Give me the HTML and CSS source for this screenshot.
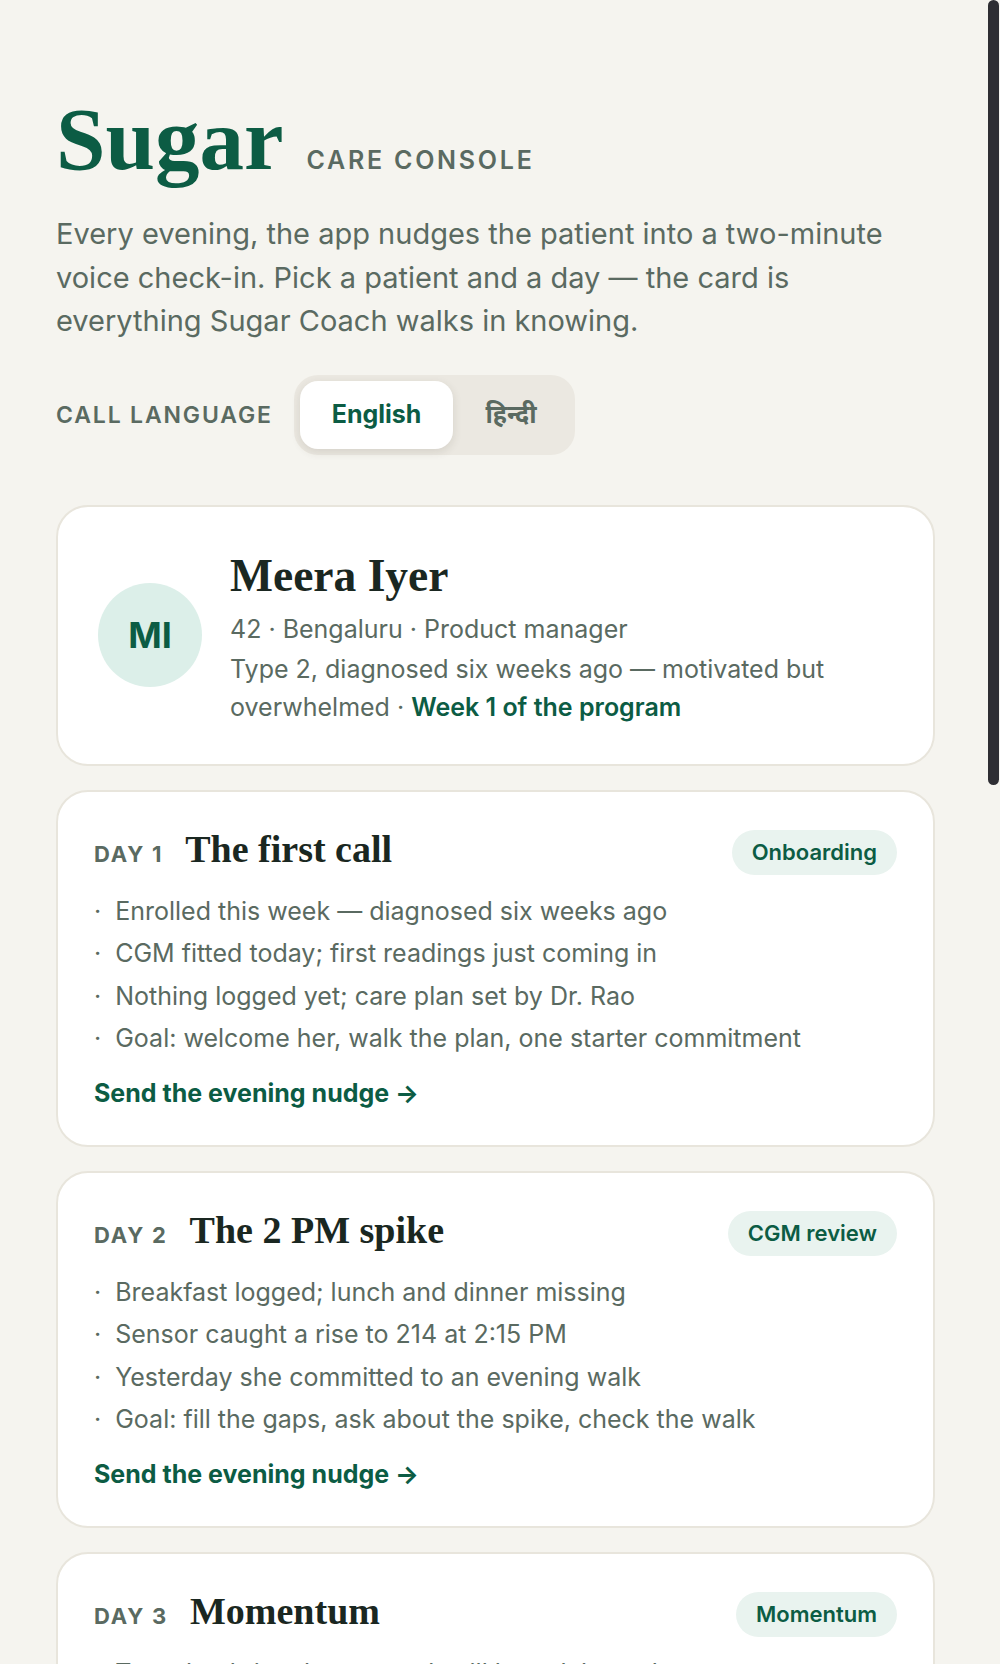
FILE: index.html
```html
<!DOCTYPE html>
<html lang="en">
<head>
<meta charset="utf-8">
<title>Sugar — Care Console</title>
<link rel="stylesheet" href="styles.css">
</head>
<body>
<div class="scroll-thumb" aria-hidden="true"></div>
<main class="page">
  <header class="masthead">
    <div class="brand">
      <h1 class="logo">Sugar</h1>
      <span class="tag">CARE CONSOLE</span>
    </div>
    <p class="lede">Every evening, the app nudges the patient into a two-minute voice check-in. Pick a patient and a day — the card is everything Sugar Coach walks in knowing.</p>
    <div class="lang">
      <span class="lang-label">CALL LANGUAGE</span>
      <div class="seg">
        <button class="seg-btn is-active">English</button>
        <button class="seg-btn hindi">हिन्दी</button>
      </div>
    </div>
  </header>

  <div class="cards">
    <section class="card patient">
      <div class="avatar">MI</div>
      <div class="patient-info">
        <h2 class="patient-name">Meera Iyer</h2>
        <p class="patient-meta">42 · Bengaluru · Product manager</p>
        <p class="patient-note">Type 2, diagnosed six weeks ago — motivated but overwhelmed · <strong class="accent">Week 1 of the program</strong></p>
      </div>
    </section>

    <article class="card day">
      <div class="day-head">
        <div class="day-title"><span class="day-num">DAY 1</span><h3 class="day-name">The first call</h3></div>
        <span class="badge">Onboarding</span>
      </div>
      <ul class="facts">
        <li>Enrolled this week — diagnosed six weeks ago</li>
        <li>CGM fitted today; first readings just coming in</li>
        <li>Nothing logged yet; care plan set by Dr. Rao</li>
        <li>Goal: welcome her, walk the plan, one starter commitment</li>
      </ul>
      <a class="nudge" href="#">Send the evening nudge →</a>
    </article>

    <article class="card day">
      <div class="day-head">
        <div class="day-title"><span class="day-num">DAY 2</span><h3 class="day-name">The 2 PM spike</h3></div>
        <span class="badge">CGM review</span>
      </div>
      <ul class="facts">
        <li>Breakfast logged; lunch and dinner missing</li>
        <li>Sensor caught a rise to 214 at 2:15 PM</li>
        <li>Yesterday she committed to an evening walk</li>
        <li>Goal: fill the gaps, ask about the spike, check the walk</li>
      </ul>
      <a class="nudge" href="#">Send the evening nudge →</a>
    </article>

    <article class="card day">
      <div class="day-head">
        <div class="day-title"><span class="day-num">DAY 3</span><h3 class="day-name">Momentum</h3></div>
        <span class="badge">Momentum</span>
      </div>
      <ul class="facts">
        <li>Two check-ins done; streak will be celebrated</li>
        <li>Evening walk logged two nights running</li>
        <li>Post-dinner readings settling under 160</li>
        <li>Goal: celebrate the streak, add one new habit</li>
      </ul>
      <a class="nudge" href="#">Send the evening nudge →</a>
    </article>

    <article class="card day">
      <div class="day-head">
        <div class="day-title"><span class="day-num">DAY 4</span><h3 class="day-name">A rough night</h3></div>
        <span class="badge">Check-in</span>
      </div>
      <ul class="facts">
        <li>Slept badly; fasting reading up to 148</li>
        <li>Skipped the walk — late meeting ran over</li>
        <li>Dinner logged at 10:40 PM</li>
        <li>Goal: no guilt, reset tomorrow's plan together</li>
      </ul>
      <a class="nudge" href="#">Send the evening nudge →</a>
    </article>

    <article class="card day">
      <div class="day-head">
        <div class="day-title"><span class="day-num">DAY 5</span><h3 class="day-name">Eating out</h3></div>
        <span class="badge">Coaching</span>
      </div>
      <ul class="facts">
        <li>Team lunch at a restaurant planned for tomorrow</li>
        <li>Asked what to order in the app chat</li>
        <li>Walk back on track; two days this week</li>
        <li>Goal: build a simple eating-out game plan</li>
      </ul>
      <a class="nudge" href="#">Send the evening nudge →</a>
    </article>

    <article class="card day">
      <div class="day-head">
        <div class="day-title"><span class="day-num">DAY 6</span><h3 class="day-name">The weekend</h3></div>
        <span class="badge">Habits</span>
      </div>
      <ul class="facts">
        <li>Family visiting; routine likely to slip</li>
        <li>Time in range up to 71% this week</li>
        <li>All meals logged for the first time</li>
        <li>Goal: plan for the weekend, keep one anchor habit</li>
      </ul>
      <a class="nudge" href="#">Send the evening nudge →</a>
    </article>

    <article class="card day">
      <div class="day-head">
        <div class="day-title"><span class="day-num">DAY 7</span><h3 class="day-name">Week one, done</h3></div>
        <span class="badge">Review</span>
      </div>
      <ul class="facts">
        <li>Six of seven check-ins completed</li>
        <li>Average post-meal peak down from 214 to 176</li>
        <li>Follow-up with Dr. Rao booked for next week</li>
        <li>Goal: look back on the week, set week two's focus</li>
      </ul>
      <a class="nudge" href="#">Send the evening nudge →</a>
    </article>
  </div>
</main>
</body>
</html>
```
FILE: styles.css
```css
* { box-sizing: border-box; margin: 0; padding: 0; }

html { background: #f5f4ef; }

body {
  font-family: Inter, "Noto Sans", sans-serif;
  color: #5a6a61;
  background: #f5f4ef;
}

/* overlay scrollbar thumb, as in the captured window */
.scroll-thumb {
  position: fixed;
  top: 0;
  right: 1px;
  width: 11px;
  height: 785px;
  border-radius: 6px;
  background: #2e2e33;
  z-index: 10;
}

.page { max-width: 991px; padding: 95px 56px 104px; }

.masthead { margin-bottom: 50px; }

.brand { display: flex; align-items: baseline; gap: 23px; }
.logo {
  font-family: "Liberation Serif", "DejaVu Serif", serif;
  font-weight: 700;
  font-size: 89px;
  line-height: 1;
  color: #0c5c44;
}
.tag { font-size: 25px; font-weight: 600; letter-spacing: 0.11em; color: #5a6a61; }

.lede { margin-top: 28px; font-size: 29px; line-height: 43.5px; max-width: 850px; color: #5a6a61; }

.lang { margin-top: 32px; display: flex; align-items: center; gap: 21px; }
.lang-label { font-size: 23px; font-weight: 600; letter-spacing: 0.08em; color: #5a6a61; }

.seg { display: flex; padding: 6px; background: #ebe8e1; border-radius: 24px; }
.seg-btn {
  font-family: Inter, "Noto Sans", sans-serif;
  font-size: 25px;
  font-weight: 700;
  line-height: 31px;
  padding: 18.5px 32px;
  border: 0;
  background: transparent;
  border-radius: 18px;
  color: #5a6a61;
}
.seg-btn.is-active { background: #fff; color: #0c5c44; box-shadow: 0 3px 10px rgba(60, 50, 30, 0.12); }

.cards { display: flex; flex-direction: column; gap: 24px; }

.card { background: #fff; border: 2px solid #e8e5dc; border-radius: 32px; }

.patient { display: flex; align-items: center; gap: 28px; padding: 38px 40px; }
.avatar {
  flex: none;
  width: 104px;
  height: 104px;
  border-radius: 50%;
  background: #dcefe9;
  color: #0c5c44;
  display: flex;
  align-items: center;
  justify-content: center;
  font-size: 36px;
  font-weight: 700;
}
.patient-info { padding-top: 4px; }
.patient-name {
  font-family: "Liberation Serif", "DejaVu Serif", serif;
  font-weight: 700;
  font-size: 45.5px;
  line-height: 53px;
  color: #1a2721;
}
.patient-meta { margin-top: 8px; font-size: 25px; line-height: 38px; }
.patient-note { margin-top: 2px; font-size: 25px; line-height: 38px; }
.accent { color: #0c5c44; font-weight: 600; }

.day { padding: 38px 36px 37px; }
.day-head { display: flex; align-items: center; justify-content: space-between; }
.day-title { display: flex; align-items: baseline; gap: 22px; margin-top: -6px; }
.day-num { font-size: 22px; font-weight: 700; letter-spacing: 0.08em; color: #5a6a61; }
.day-name {
  font-family: "Liberation Serif", "DejaVu Serif", serif;
  font-weight: 700;
  font-size: 38px;
  line-height: 45px;
  color: #1a2721;
}
.badge {
  font-size: 22px;
  font-weight: 600;
  line-height: 45px;
  padding: 0 20px;
  border-radius: 999px;
  background: #e9f3ef;
  color: #0c5c44;
}

.facts { list-style: none; margin-top: 17px; display: flex; flex-direction: column; gap: 4px; }
.facts li { display: flex; gap: 14px; font-size: 25px; line-height: 38.5px; }
.facts li::before { content: "·"; }

.nudge {
  display: inline-block;
  margin-top: 20px;
  font-size: 25px;
  font-weight: 700;
  line-height: 30px;
  color: #0c5c44;
  text-decoration: none;
}
```
